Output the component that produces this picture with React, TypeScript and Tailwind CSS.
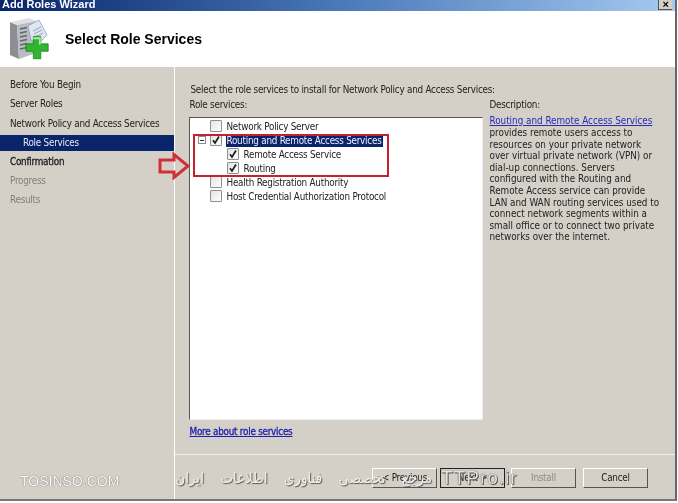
import React from "react";

function Check({ checked }: { checked?: boolean }) {
  return (
    <span className="flex h-[12px] w-[12px] shrink-0 items-center justify-center rounded-[1px] border border-[#8f8f8f] bg-gradient-to-br from-[#e4e4e4] to-white">
      {checked && (
        <svg width="10" height="10" viewBox="0 0 10 10">
          <path d="M2 5.2 L4 8 L8 1.5" fill="none" stroke="#1c1c1c" strokeWidth="1.7" />
        </svg>
      )}
    </span>
  );
}

function Row({ label, level, checked, selected, expander }: { label: string; level: 0 | 1; checked?: boolean; selected?: boolean; expander?: boolean }) {
  return (
    <div className={level === 1 ? "flex h-[14px] items-center pl-[37px]" : "flex h-[14px] items-center pl-[20px]"}>
      {expander && (
        <span className="ml-[-12px] mr-[4px] flex h-[8px] w-[8px] items-center justify-center border border-[#8a8a8a]">
          <span className="h-px w-[4px] bg-[#333]" />
        </span>
      )}
      <Check checked={checked} />
      <span className={selected ? "ml-[4px] whitespace-nowrap bg-[#0a246a] px-[1px] leading-[13px] text-[#eef]" : "ml-[5px] whitespace-nowrap leading-[13px] text-[#222]"}>{label}</span>
    </div>
  );
}

function Nav({ label, variant }: { label: string; variant?: "active" | "sel" | "dim" }) {
  const cls =
    variant === "sel"
      ? "flex h-[16px] items-center whitespace-nowrap bg-[#0a246a] pl-[23px] text-[#e8e8f0] my-[1.6px]"
      : variant === "active"
      ? "flex h-[19.2px] items-center whitespace-nowrap pl-[10px] font-medium [-webkit-text-stroke:0.3px_#222] text-[#222]"
      : variant === "dim"
      ? "flex h-[19.2px] items-center whitespace-nowrap pl-[10px] text-[#808080]"
      : "flex h-[19.2px] items-center whitespace-nowrap pl-[10px] text-[#222]";
  return <div className={cls}>{label}</div>;
}

function Btn({ label, dim, def, className }: { label: string; dim?: boolean; def?: boolean; className?: string }) {
  const border = def ? "border-[#222]" : "border-t-white border-l-white border-r-[#555] border-b-[#555]";
  return (
    <div className={`flex h-[20px] w-[65px] items-center justify-center border bg-[#d4d0c8] ${border} ${dim ? "text-[#8a8a8a]" : "text-[#222]"} ${className ?? ""}`}>
      {label}
    </div>
  );
}

const desc = [
  "provides remote users access to",
  "resources on your private network",
  "over virtual private network (VPN) or",
  "dial-up connections. Servers",
  "configured with the Routing and",
  "Remote Access service can provide",
  "LAN and WAN routing services used to",
  "connect network segments within a",
  "small office or to connect two private",
  "networks over the internet.",
];

export default function App() {
  return (
    <div className="relative h-[503px] w-[678px] overflow-hidden bg-white font-['DejaVu_Sans_Condensed','DejaVu_Sans',sans-serif] text-[9.8px] tracking-[-0.23px] [font-stretch:condensed] blur-[0.3px]">
      <div className="flex h-[501px] w-[677px] flex-col border-r-2 border-b-2 border-r-[#666] border-b-[#777]">
        {/* Title bar */}
        <div className="flex h-[11px] shrink-0 overflow-hidden bg-gradient-to-r from-[#0a246a] via-[#4a78b8] to-[#a6caf0] pl-[2px]">
          <span className="mt-[-2px] whitespace-nowrap font-['Liberation_Sans',sans-serif] text-[11px] font-bold leading-[12px] tracking-normal text-white">Add Roles Wizard</span>
          <span className="ml-auto mr-[3px] flex h-[10px] w-[14px] items-center justify-center border-b border-l border-[#555] bg-[#d4d0c8] font-['Liberation_Sans',sans-serif] text-[11px] font-bold leading-[9px] text-black">×</span>
        </div>

        {/* Header */}
        <div className="flex h-[56px] shrink-0 items-center bg-white pl-[9px]">
          <svg width="40" height="44" viewBox="0 0 40 44">
            <path d="M1 5 L8 8 L10 42 L1 38 Z" fill="#8b8f94" />
            <path d="M1 5 L20 1 L27 4 L8 8 Z" fill="#dfe1e4" />
            <path d="M8 8 L27 4 L27 36 L10 42 Z" fill="#b9bcc0" />
            <path d="M11 12 L18 10.5 M11 16 L18 14.5 M11 20 L18 18.5 M11 24 L18 22.5 M11 28 L18 26.5 M11 32 L18 30.5" stroke="#666" strokeWidth="1.4" />
            <path d="M19 9 L30 3 L38 18 L29 27 L22 23 Z" fill="#dfe8f2" stroke="#8aa0b8" strokeWidth="0.8" />
            <path d="M24 14 L32 10 M25 17 L33 13 M26 20 L34 16" stroke="#8ea4bc" strokeWidth="1" />
            <path d="M24 23 H32 V31 H40 V39 H32 V47 H24 V39 H16 V31 H24 Z" transform="translate(2 -2) scale(0.93)" fill="#2fb52f" stroke="#17801c" strokeWidth="0.8" />
            <path d="M24 25 H31 V32" transform="translate(2 -2) scale(0.93)" fill="none" stroke="#a7ec9c" strokeWidth="2" />
          </svg>
          <h1 className="ml-[16px] mt-[1px] whitespace-nowrap font-['Liberation_Sans',sans-serif] text-[14px] font-bold tracking-normal text-black">Select Role Services</h1>
        </div>

        {/* Body */}
        <div className="flex min-h-0 flex-1 bg-[#d4d0c8]">
          <nav className="w-[174px] shrink-0 pt-[9px]">
            <Nav label="Before You Begin" />
            <Nav label="Server Roles" />
            <Nav label="Network Policy and Access Services" />
            <Nav label="Role Services" variant="sel" />
            <Nav label="Confirmation" variant="active" />
            <Nav label="Progress" variant="dim" />
            <Nav label="Results" variant="dim" />
          </nav>
          <div className="flex min-w-0 flex-1 flex-col border-l-[1.5px] border-l-white">
            <div className="flex h-[388px] shrink-0 flex-col border-b border-b-[#f2f0ec] pl-[13.5px] pt-[15px]">
              <p className="pl-[2px] whitespace-nowrap leading-[15px] text-[#222]">Select the role services to install for Network Policy and Access Services:</p>
              <div className="flex min-h-0 flex-1">
                <div className="w-[294px] shrink-0">
                  <p className="pl-[1px] leading-[16px] text-[#222]">Role services:</p>
                  <div className="mt-[4px] h-[303px] w-[294px] border border-t-[#555] border-l-[#555] border-r-[#eee] border-b-[#eee] bg-white pt-[1px]">
                    <Row label="Network Policy Server" level={0} />
                    <Row label="Routing and Remote Access Services" level={0} checked selected expander />
                    <Row label="Remote Access Service" level={1} checked />
                    <Row label="Routing" level={1} checked />
                    <Row label="Health Registration Authority" level={0} />
                    <Row label="Host Credential Authorization Protocol" level={0} />
                  </div>
                  <a className="mt-[5px] block pl-[1px] leading-[14px] text-[#2020b0] underline [-webkit-text-stroke:0.3px_#2020b0]">More about role services</a>
                </div>
                <div className="ml-[7px] w-[176px]">
                  <p className="leading-[16px] text-[#222]">Description:</p>
                  <div className="mt-[2px] leading-[11.6px] tracking-normal text-[#222]">
                    <a className="block whitespace-nowrap leading-[12px] text-[#2a2ab8] underline">Routing and Remote Access Services</a>
                    {desc.map((line) => (
                      <p key={line} className="whitespace-nowrap">{line}</p>
                    ))}
                  </div>
                </div>
              </div>
            </div>
            {/* Footer */}
            <div className="flex flex-1 items-start justify-end pr-[27px] pt-[13px]">
              <Btn label="< Previous" />
              <Btn label="Next >" def className="ml-[3px]" />
              <Btn label="Install" dim className="ml-[6px]" />
              <Btn label="Cancel" className="ml-[7px]" />
            </div>
          </div>
        </div>
      </div>

      {/* Annotations painted over the screenshot */}
      <div className="absolute left-[193px] top-[134px] h-[43px] w-[196px] border-[2.5px] border-[#c4202e]" />
      <svg className="absolute left-[158px] top-[152px]" width="33" height="28" viewBox="0 0 33 28">
        <path d="M2 8 H16 V2.5 L30 14 L16 25.5 V20 H2 Z" fill="none" stroke="#d0303a" strokeWidth="3" />
      </svg>

      {/* Watermarks */}
      <span className="absolute left-[20px] top-[474px] font-['Liberation_Sans',sans-serif] text-[14px] leading-[15px] tracking-normal text-white [text-shadow:0_0_1px_#222]">TOSINSO.COM</span>
      <span dir="rtl" className="absolute left-[176px] top-[468px] w-[256px] whitespace-nowrap font-['DejaVu_Sans',sans-serif] text-[15px] leading-[20px] tracking-normal text-[#f0eee8] [word-spacing:12px] [text-shadow:1px_1px_1px_#555]">مرجع تخصصی فناوری اطلاعات ایران</span>
      <span className="absolute left-[441px] top-[468px] font-['Liberation_Sans',sans-serif] text-[19px] leading-[20px] tracking-[1px] text-[#e4e2db] [text-shadow:0_0_1px_#111,1px_1px_0_#666]">TTPro.ir</span>
    </div>
  );
}
